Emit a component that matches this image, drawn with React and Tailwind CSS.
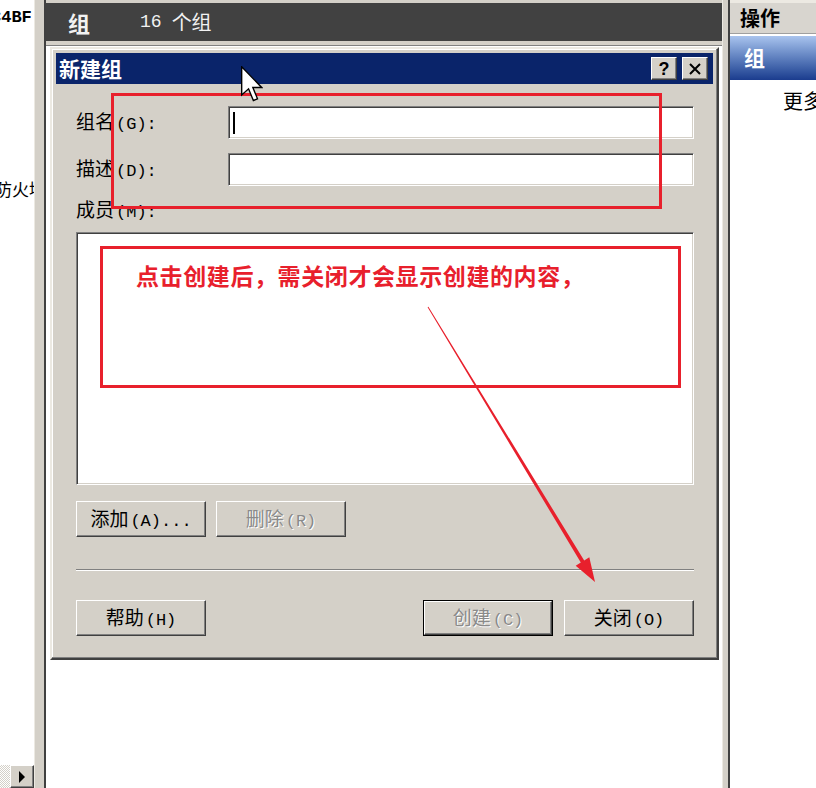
import React from 'react';

const FONT = { fontFamily: '"Noto Sans CJK SC", "Liberation Sans", sans-serif' };
const MONO = { fontFamily: '"Liberation Mono", monospace' };

const raised =
  'bg-[#d4d0c8] border border-t-white border-l-white border-r-[#404040] border-b-[#404040] shadow-[inset_-1px_-1px_0_#808080]';
const sunken =
  'bg-white border border-t-[#808080] border-l-[#808080] border-r-white border-b-white shadow-[inset_1px_1px_0_#404040,inset_-1px_-1px_0_#d4d0c8]';

// CJK part + half-width latin part, like the old bitmap dialog font
function Lbl({ cjk, latin, className = '' }) {
  return (
    <span className={`inline-flex items-baseline whitespace-nowrap ${className}`}>
      <span className="text-[19px]">{cjk}</span>
      <span className="ml-[2px] text-[17px]" style={MONO}>{latin}</span>
    </span>
  );
}

function WinButton({ cjk, latin, disabled, isDefault, className = '' }) {
  const inner = (
    <div
      className={`${raised} h-full w-full flex items-center justify-center ${
        disabled ? 'text-[#8a8a8a] [text-shadow:1px_1px_0_#ffffff]' : 'text-black'
      }`}
    >
      <Lbl cjk={cjk} latin={latin} />
    </div>
  );
  if (isDefault) {
    return <div className={`border border-black h-[36px] w-[130px] ${className}`}>{inner}</div>;
  }
  return <div className={`h-[36px] w-[130px] ${className}`}>{inner}</div>;
}

function Arrow() {
  return (
    <svg className="absolute inset-0 pointer-events-none" width="816" height="788" viewBox="0 0 816 788">
      <polygon
        points="427.6,307.3 580.8,562.5 575.7,565.7 595,582 589.3,557.3 584.2,560.5 428.4,306.7"
        fill="#e8202c"
      />
    </svg>
  );
}

function Cursor() {
  return (
    <svg className="absolute left-[241px] top-[66px] pointer-events-none" width="22" height="36" viewBox="0 0 16 26">
      <path d="M0.5,0.5 L0.5,21 L5.5,16.5 L9,25 L12,23.8 L8.6,15.5 L15,15.5 Z" fill="#ffffff" stroke="#000000" strokeWidth="1" />
    </svg>
  );
}

export default function App() {
  return (
    <div className="relative w-[816px] h-[788px] overflow-hidden bg-white flex" style={FONT}>
      {/* Left pane (clipped) */}
      <div className="w-[34px] h-full bg-white flex flex-col overflow-hidden">
        <div className="mt-[8px] ml-[-9px] text-[17px] font-bold leading-[20px] text-black whitespace-nowrap" style={MONO}>
          C4BF
        </div>
        <div className="mt-[150px] ml-[-5px] text-[17px] leading-[22px] text-black whitespace-nowrap">防火墙</div>
        <div className="mt-auto h-[23px] flex">
          <div className="w-[10px] h-full bg-[repeating-conic-gradient(#d4d0c8_0%_25%,#ffffff_0%_50%)] bg-[length:2px_2px]" />
          <div className={`${raised} w-[24px] h-full flex items-center justify-center`}>
            <svg width="8" height="12" viewBox="0 0 8 12">
              <polygon points="1,0 7,6 1,12" fill="#000" />
            </svg>
          </div>
        </div>
      </div>

      {/* Splitter */}
      <div className="w-[12px] h-full bg-[#d4d0c8] border-l border-[#ece9e2] border-r-2 border-r-[#404040]" />

      {/* Middle pane */}
      <div className="w-[676px] h-full flex flex-col">
        <div className="h-[3px] bg-[#d4d0c8]" />
        <div className="h-[38px] bg-[#414141] flex items-center text-[#f2f2f2]">
          <span className="ml-[22px] text-[22px] font-bold">组</span>
          <span className="ml-[50px] text-[18px]" style={MONO}>16</span>
          <span className="ml-[10px] text-[20px]">个组</span>
        </div>
        <div className="h-[5px] bg-[#d4d0c8] border-b border-[#808080]" />
        <div className="flex-1 bg-white pl-[4px] pt-[1px]">
          {/* Dialog */}
          <div className="w-[669px] h-[613px] bg-[#d4d0c8] border-2 border-t-[#ece9e2] border-l-[#ece9e2] border-r-[#404040] border-b-[#404040] shadow-[inset_-1px_-1px_0_#808080,inset_1px_1px_0_#ffffff] p-[4px] flex flex-col">
            <div className="h-[31px] bg-[#0a246a] flex items-center pl-[3px] pr-[5px]">
              <span className="text-white font-bold text-[21px] leading-none">新建组</span>
              <div className="ml-auto flex gap-[5px]">
                <div className={`${raised} w-[26px] h-[23px] flex items-center justify-center text-[18px] font-bold leading-none`} style={{ fontFamily: '"Liberation Sans", sans-serif' }}>
                  ?
                </div>
                <div className={`${raised} w-[26px] h-[23px] flex items-center justify-center`}>
                  <svg width="14" height="12" viewBox="0 0 14 12">
                    <path d="M2,1 L12,11 M12,1 L2,11" stroke="#000" strokeWidth="2" />
                  </svg>
                </div>
              </div>
            </div>

            <div className="flex-1 flex flex-col pl-[20px] pr-[19px] pt-[22px] text-black">
              <div className="h-[33px] flex items-center">
                <Lbl cjk="组名" latin="(G):" className="w-[152px]" />
                <div className={`${sunken} flex-1 h-full flex items-center pl-[4px]`}>
                  <span className="w-[2px] h-[22px] bg-black" />
                </div>
              </div>
              <div className="mt-[14px] h-[33px] flex items-center">
                <Lbl cjk="描述" latin="(D):" className="w-[152px]" />
                <div className={`${sunken} flex-1 h-full`} />
              </div>
              <div className="mt-[14px] h-[22px] leading-[22px] flex items-center">
                <Lbl cjk="成员" latin="(M):" />
              </div>
              <div className={`${sunken} mt-[10px] h-[253px]`} />
              <div className="mt-[16px] flex gap-[10px]">
                <WinButton cjk="添加" latin="(A)..." />
                <WinButton cjk="删除" latin="(R)" disabled />
              </div>
              <div className="mt-[32px] h-[2px] border-t border-[#808080] border-b border-b-white" />
              <div className="mt-[29px] flex">
                <WinButton cjk="帮助" latin="(H)" />
                <WinButton cjk="创建" latin="(C)" disabled isDefault className="ml-auto" />
                <WinButton cjk="关闭" latin="(O)" className="ml-[11px]" />
              </div>
            </div>
          </div>
        </div>
      </div>

      {/* Splitter */}
      <div className="w-[8px] h-full bg-[#d4d0c8] border-l border-[#ece9e2] border-r-2 border-r-[#404040]" />

      {/* Right pane */}
      <div className="flex-1 h-full flex flex-col overflow-hidden">
        <div className="h-[3px] bg-[#ece9e2]" />
        <div className="h-[31px] bg-[#d8d5cf] border-b border-[#a0a0a0] flex items-center pl-[10px] text-[20px] font-bold text-black">
          操作
        </div>
        <div className="mt-[2px] h-[44px] bg-gradient-to-b from-[#a9c4ee] to-[#1b3c8e] flex items-center pl-[14px] text-white text-[21px] font-bold">
          组
        </div>
        <div className="mt-[6px] pl-[53px] text-[20px] text-black whitespace-nowrap">更多操作</div>
      </div>

      {/* Annotations */}
      <div className="absolute left-[111px] top-[93px] w-[551px] h-[116px] border-[3px] border-[#e8202c]" />
      <div className="absolute left-[100px] top-[246px] w-[581px] h-[142px] border-[3px] border-[#e8202c] pl-[33px] pt-[13px]">
        <span className="text-[23px] leading-[26px] tracking-[0.6px] font-bold text-[#e8202c] whitespace-nowrap">点击创建后，需关闭才会显示创建的内容，</span>
      </div>
      <Arrow />
      <Cursor />
    </div>
  );
}
